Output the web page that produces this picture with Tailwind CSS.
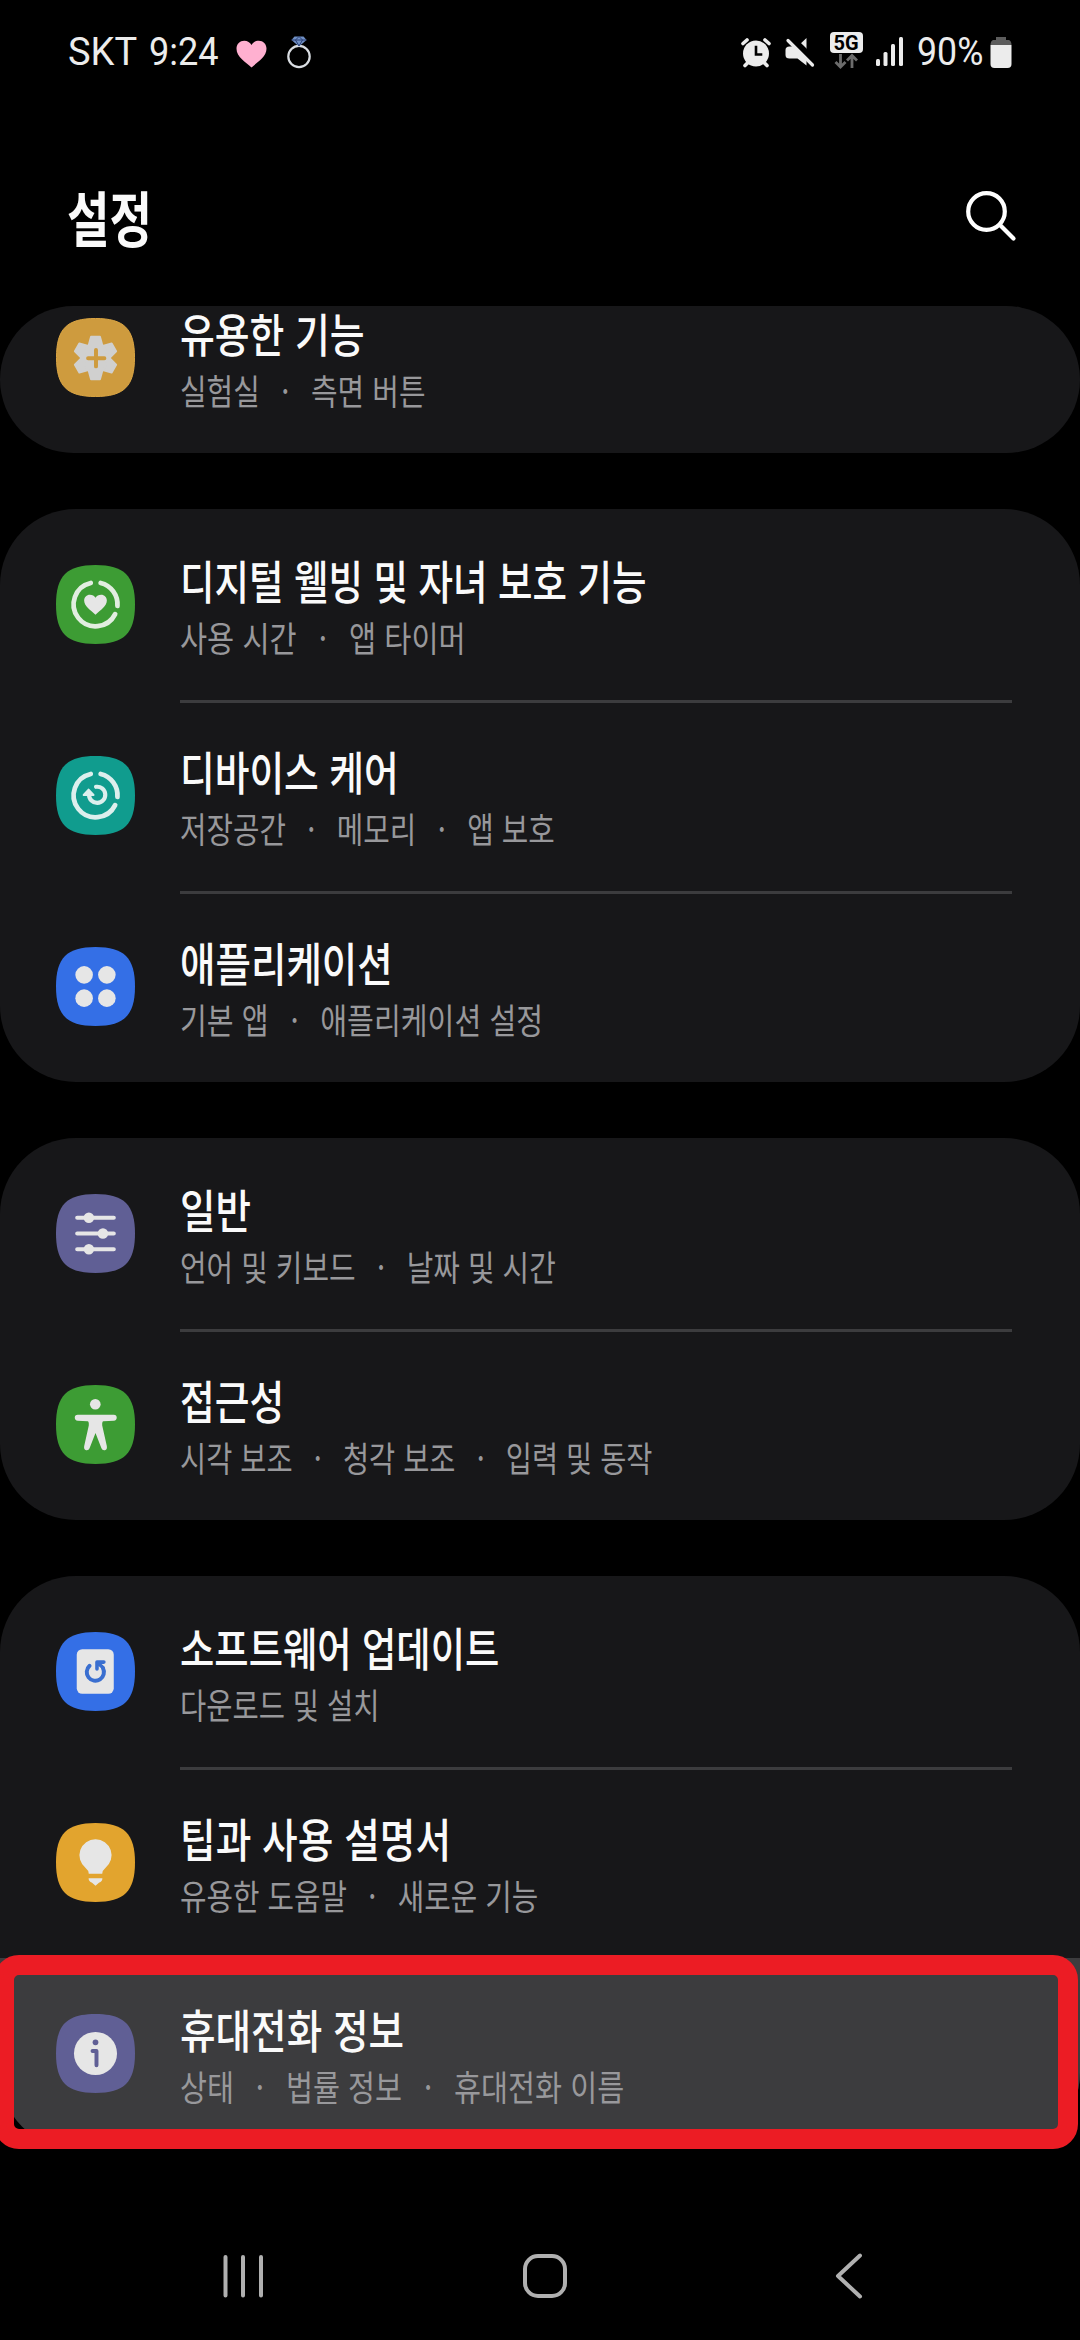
<!DOCTYPE html>
<html lang="ko">
<head>
<meta charset="utf-8">
<title>설정</title>
<script src="https://cdn.jsdelivr.net/npm/@tailwindcss/browser@4"></script>
</head>
<body class="bg-black">
<div class="relative flex h-[2340px] w-[1080px] flex-col overflow-hidden bg-black font-['Noto_Sans_CJK_KR','Noto_Sans',sans-serif] text-[#fafafa]">

  <!-- status bar -->
  <header class="flex h-[104px] shrink-0 items-center justify-between pl-[68px] pr-[68px] text-[#ececec]">
    <div class="flex items-center font-[Roboto,sans-serif] text-[38px] leading-none">
      <span class="w-[81px] origin-left whitespace-nowrap">SKT</span>
      <span class="w-[87px] origin-left scale-x-[0.95] whitespace-nowrap">9:24</span>
      <svg class="mt-1 h-[28px] w-[31px]" viewBox="0 0 31 28"><path fill="#ffb0d0" d="M15.500 27.500C10 22.500.5 17 .5 8.800.5 4 4 .8 8.200.8c3.300 0 5.900 1.600 7.300 4.200C16.900 2.400 19.500.8 22.800.8 27 .8 30.500 4 30.500 8.800c0 8.200-9.500 13.700-15 18.700z"/></svg>
      <svg class="ml-[19px] h-[34px] w-[26px]" viewBox="0 0 26 34"><circle cx="13" cy="21.500" r="10.700" fill="none" stroke="#d9dde2" stroke-width="2.200"/><path fill="#6f8fc4" d="M8.500 1.500h9l3 3.500L13 11.500 5.500 5z"/><path fill="none" stroke="#2b3f75" stroke-width="1" d="M5.500 5h15M9.500 5l3.500 6 3.500-6-3.500-3.500z"/></svg>
    </div>
    <div class="flex items-center">
      <svg class="h-[32px] w-[32px]" viewBox="0 0 32 32" fill="none" stroke="#ececec" stroke-linecap="round"><circle cx="16" cy="17.500" r="13" fill="#ececec" stroke="none"/><path stroke-width="3.600" d="M3 7.500 7 4M29 7.500 25 4M7.500 27 5 29.500M24.500 27l2.500 2.500"/><path stroke="#000" stroke-width="2.600" stroke-linecap="square" d="M16 11v7.500h5"/></svg>
      <svg class="ml-[12px] h-[32px] w-[32px]" viewBox="0 0 32 32"><path fill="#ececec" d="M22.500 2v27.500l-9-7H5.500Q1.500 22.500 1.500 19v-5q0-3.500 4-3.500h8z"/><path stroke="#000" stroke-width="7" d="M6 1 33 28"/><path stroke="#ececec" stroke-width="3.200" stroke-linecap="round" d="M4 4.500 28.500 29"/></svg>
      <div class="ml-[13px] flex w-[34px] flex-col items-center">
        <div class="mt-[-3px] flex h-[21px] w-[33px] items-center justify-center rounded-[4px] bg-[#ececec] font-[Roboto,sans-serif] text-[20px] leading-none font-bold text-black">5G</div>
        <svg class="h-[16px] w-[26px]" viewBox="0 0 26 16" fill="none" stroke="#6c6c6c" stroke-width="2.800"><path d="M7.500 1v12.500M2.500 9l5 5 5-5M19 15V3M14 7.500l5-5 5 5"/></svg>
      </div>
      <svg class="ml-[12px] h-[32px] w-[30px]" viewBox="0 0 30 32" fill="#ececec"><rect x="1" y="23" width="4" height="7" rx="1.500"/><rect x="8.500" y="16" width="4" height="14" rx="1.500"/><rect x="16" y="8" width="4" height="22" rx="1.500"/><rect x="24" y="1" width="4" height="29" rx="1.500"/></svg>
      <span class="ml-[12px] w-[73px] origin-left scale-x-[0.94] font-[Roboto,sans-serif] text-[38px] leading-none">90%</span>
      <svg class="h-[32px] w-[22px]" viewBox="0 0 22 32"><path fill="#5c5c5c" d="M6 1h10v3h3q2.500 1 2.500 5H.5q0-4 2.500-5h3z"/><path fill="#ececec" d="M.5 9h21v19q0 4-4 4h-13q-4 0-4-4z"/></svg>
    </div>
  </header>

  <div class="flex h-[202px] shrink-0 items-center justify-between pt-[23px] pr-[62px] pb-[1px] pl-[67px]">
    <h1 class="origin-left scale-x-[0.77] text-[60px] leading-none font-bold">설정</h1>
    <svg class="h-[54px] w-[54px]" viewBox="0 0 54 54" fill="none" stroke="#fff" stroke-width="4.200" stroke-linecap="round"><circle cx="22.500" cy="22.500" r="18.300"/><path d="M36 36 49.500 49.500"/></svg>
  </div>

  <main class="flex flex-col">
    <!-- advanced features, scrolled partly under the title -->
    <section class="mb-[56px] flex h-[147px] rounded-[76px] bg-[#171719] pl-[56px]">
      <svg class="mt-[12px] h-[79px] w-[79px] shrink-0" viewBox="0 0 80 80"><path fill="#ce9b3e" stroke="#dca744" stroke-width="1" d="M40 .5C69 .5 79.500 11 79.500 40S69 79.500 40 79.500.5 69 .5 40 11 .5 40 .5Z"/><g fill="#d0d0cf" stroke="#d0d0cf" stroke-width="2" stroke-linejoin="round"><circle cx="40" cy="40.500" r="14.500"/><path d="M35.500 19h9L47 28H33z"/><path d="M35.500 19h9L47 28H33z" transform="rotate(60 40 40.500)"/><path d="M35.500 19h9L47 28H33z" transform="rotate(120 40 40.500)"/><path d="M35.500 19h9L47 28H33z" transform="rotate(180 40 40.500)"/><path d="M35.500 19h9L47 28H33z" transform="rotate(240 40 40.500)"/><path d="M35.500 19h9L47 28H33z" transform="rotate(300 40 40.500)"/></g><path stroke="#ce9b3e" stroke-width="4" stroke-linecap="round" d="M40.500 32.500v16.500M32.500 40.700h16.500"/></svg>
      <div class="ml-[45px] whitespace-nowrap">
        <p class="h-[58px] origin-left scale-x-[0.822] text-[46px] leading-[52px] font-medium">유용한 기능</p>
        <p class="flex h-[48px] origin-left scale-x-[0.826] text-[35px] leading-[52px] text-[#98989b]">실험실<span class="w-[62px] text-center">·</span>측면 버튼</p>
      </div>
    </section>

    <section class="mb-[56px] rounded-[76px] bg-[#171719]">
      <div class="flex h-[191px] pt-[42px] pl-[56px]">
        <svg class="mt-[14px] h-[79px] w-[79px] shrink-0" viewBox="0 0 80 80"><path fill="#3d9c34" d="M40 0C69 0 80 11 80 40S69 80 40 80 0 69 0 40 11 0 40 0Z"/><g fill="none" stroke="#e2eee0" stroke-width="4.800" stroke-linecap="round"><path d="M45.200 18.200A22.200 22.200 0 0 1 62.200 41.500"/><path d="M59.900 49.800A22.200 22.200 0 1 1 35.200 18.200"/></g><path fill="#e6e6e6" d="M40 50.500C35 45.500 28.500 42 28.500 36c0-3.500 2.500-6 5.800-6 2.500 0 4.600 1.200 5.700 3.200C41.100 31.200 43.200 30 45.700 30c3.300 0 5.800 2.500 5.800 6 0 6-6.500 9.500-11.500 14.500z"/></svg>
        <div class="ml-[45px] whitespace-nowrap">
          <p class="h-[60px] origin-left scale-x-[0.815] text-[46px] leading-[56px] font-medium">디지털 웰빙 및 자녀 보호 기능</p>
          <p class="flex h-[48px] origin-left scale-x-[0.842] text-[35px] leading-[52px] text-[#98989b]">사용 시간<span class="w-[62px] text-center">·</span>앱 타이머</p>
        </div>
      </div>
      <div class="relative flex h-[191px] pt-[42px] pl-[56px]">
        <div class="absolute top-0 right-[68px] left-[180px] h-[3px] bg-[#3c3c3e]"></div>
        <svg class="mt-[14px] h-[79px] w-[79px] shrink-0" viewBox="0 0 80 80"><path fill="#109c8e" d="M40 0C69 0 80 11 80 40S69 80 40 80 0 69 0 40 11 0 40 0Z"/><g fill="none" stroke="#dcefed" stroke-width="4.800" stroke-linecap="round"><path d="M45.200 18.200A22.200 22.200 0 0 1 62.200 41.500"/><path d="M59.900 49.800A22.200 22.200 0 1 1 35.200 18.200"/><path stroke-width="4.200" d="M40.500 31.200A8.200 8.200 0 1 1 33.500 39"/></g><path fill="#dcefed" stroke="#dcefed" stroke-width="2" stroke-linejoin="round" d="M33 34 28 39.500H38z"/></svg>
        <div class="ml-[45px] whitespace-nowrap">
          <p class="h-[60px] origin-left scale-x-[0.82] text-[46px] leading-[56px] font-medium">디바이스 케어</p>
          <p class="flex h-[48px] origin-left scale-x-[0.822] text-[35px] leading-[52px] text-[#98989b]">저장공간<span class="w-[62px] text-center">·</span>메모리<span class="w-[62px] text-center">·</span>앱 보호</p>
        </div>
      </div>
      <div class="relative flex h-[191px] pt-[42px] pl-[56px]">
        <div class="absolute top-0 right-[68px] left-[180px] h-[3px] bg-[#3c3c3e]"></div>
        <svg class="mt-[14px] h-[79px] w-[79px] shrink-0" viewBox="0 0 80 80"><path fill="#346fe6" d="M40 0C69 0 80 11 80 40S69 80 40 80 0 69 0 40 11 0 40 0Z"/><g fill="#e6e6e6"><circle cx="28.500" cy="28.200" r="8.900"/><circle cx="51.500" cy="28.200" r="8.900"/><circle cx="28.500" cy="51.800" r="8.900"/><circle cx="51.500" cy="51.800" r="8.900"/></g></svg>
        <div class="ml-[45px] whitespace-nowrap">
          <p class="h-[60px] origin-left scale-x-[0.838] text-[46px] leading-[56px] font-medium">애플리케이션</p>
          <p class="flex h-[48px] origin-left scale-x-[0.833] text-[35px] leading-[52px] text-[#98989b]">기본 앱<span class="w-[62px] text-center">·</span>애플리케이션 설정</p>
        </div>
      </div>
    </section>

    <section class="mb-[56px] rounded-[76px] bg-[#171719]">
      <div class="flex h-[191px] pt-[42px] pl-[56px]">
        <svg class="mt-[14px] h-[79px] w-[79px] shrink-0" viewBox="0 0 80 80"><path fill="#605f95" d="M40 0C69 0 80 11 80 40S69 80 40 80 0 69 0 40 11 0 40 0Z"/><path stroke="#e6e6e6" stroke-width="4.200" stroke-linecap="round" d="M21.500 24h37M21.500 40h37M21.500 56h37"/><g fill="#e6e6e6"><circle cx="33.300" cy="24" r="5.300"/><circle cx="47.500" cy="40" r="5.300"/><circle cx="33.300" cy="56" r="5.300"/></g></svg>
        <div class="ml-[45px] whitespace-nowrap">
          <p class="h-[60px] origin-left scale-x-[0.84] text-[46px] leading-[56px] font-medium">일반</p>
          <p class="flex h-[48px] origin-left scale-x-[0.825] text-[35px] leading-[52px] text-[#98989b]">언어 및 키보드<span class="w-[62px] text-center">·</span>날짜 및 시간</p>
        </div>
      </div>
      <div class="relative flex h-[191px] pt-[42px] pl-[56px]">
        <div class="absolute top-0 right-[68px] left-[180px] h-[3px] bg-[#3c3c3e]"></div>
        <svg class="mt-[14px] h-[79px] w-[79px] shrink-0" viewBox="0 0 80 80"><path fill="#3d9c34" d="M40 0C69 0 80 11 80 40S69 80 40 80 0 69 0 40 11 0 40 0Z"/><g fill="#e6e6e6"><circle cx="39.800" cy="19.500" r="5.400"/><path d="M22 30H58.500Q61.500 30 61.500 33T58.500 36.200L48 36.800Q46.500 37 46.800 41L51.500 62Q52 65.500 49.500 66T46 64L40 48.500 34 64Q33 66.500 30.500 66T28.500 62L33.200 41Q33.500 37 32 36.800L22 36.200Q19 36 19 33T22 30Z"/></g></svg>
        <div class="ml-[45px] whitespace-nowrap">
          <p class="h-[60px] origin-left scale-x-[0.82] text-[46px] leading-[56px] font-medium">접근성</p>
          <p class="flex h-[48px] origin-left scale-x-[0.812] text-[35px] leading-[52px] text-[#98989b]">시각 보조<span class="w-[62px] text-center">·</span>청각 보조<span class="w-[62px] text-center">·</span>입력 및 동작</p>
        </div>
      </div>
    </section>

    <section class="overflow-hidden rounded-[76px] bg-[#171719]">
      <div class="flex h-[191px] pt-[42px] pl-[56px]">
        <svg class="mt-[14px] h-[79px] w-[79px] shrink-0" viewBox="0 0 80 80"><path fill="#346fe6" d="M40 0C69 0 80 11 80 40S69 80 40 80 0 69 0 40 11 0 40 0Z"/><rect x="21" y="17.500" width="37.500" height="45" rx="5.500" fill="#e6e6e6"/><path fill="none" stroke="#3a6fd0" stroke-width="4" stroke-linecap="round" d="M34 34.200A8.700 8.700 0 1 0 47.500 36.500"/><path fill="none" stroke="#3a6fd0" stroke-width="3.600" stroke-linecap="round" stroke-linejoin="round" d="M41.500 37.500V30.500H48.500M42 31l5.500 5"/></svg>
        <div class="ml-[45px] whitespace-nowrap">
          <p class="h-[60px] origin-left scale-x-[0.811] text-[46px] leading-[56px] font-medium">소프트웨어 업데이트</p>
          <p class="flex h-[48px] origin-left scale-x-[0.814] text-[35px] leading-[52px] text-[#98989b]">다운로드 및 설치</p>
        </div>
      </div>
      <div class="relative flex h-[191px] pt-[42px] pl-[56px]">
        <div class="absolute top-0 right-[68px] left-[180px] h-[3px] bg-[#3c3c3e]"></div>
        <svg class="mt-[14px] h-[79px] w-[79px] shrink-0" viewBox="0 0 80 80"><path fill="#e2a42e" d="M40 0C69 0 80 11 80 40S69 80 40 80 0 69 0 40 11 0 40 0Z"/><path fill="#e6e6e6" d="M40 16.500A16.200 16.200 0 0 0 30 45.500Q33.200 48 33.200 51.500H46.800Q46.800 48 50 45.500A16.200 16.200 0 0 0 40 16.500ZM33 56H47Q47 59.500 43.500 60.500L40 63.500 36.500 60.500Q33 59.500 33 56Z"/></svg>
        <div class="ml-[45px] whitespace-nowrap">
          <p class="h-[60px] origin-left scale-x-[0.842] text-[46px] leading-[56px] font-medium">팁과 사용 설명서</p>
          <p class="flex h-[48px] origin-left scale-x-[0.822] text-[35px] leading-[52px] text-[#98989b]">유용한 도움말<span class="w-[62px] text-center">·</span>새로운 기능</p>
        </div>
      </div>
      <div class="flex h-[191px] bg-[#3c3c3e] pt-[42px] pl-[56px]">
        <svg class="mt-[14px] h-[79px] w-[79px] shrink-0" viewBox="0 0 80 80"><path fill="#605f95" d="M40 0C69 0 80 11 80 40S69 80 40 80 0 69 0 40 11 0 40 0Z"/><circle cx="40" cy="40" r="21.800" fill="#e6e6e6"/><circle cx="40" cy="28.700" r="2.900" fill="#605f95"/><path fill="none" stroke="#605f95" stroke-width="4" stroke-linecap="round" stroke-linejoin="round" d="M37 37.500h4V52"/></svg>
        <div class="ml-[45px] whitespace-nowrap">
          <p class="h-[60px] origin-left scale-x-[0.84] text-[46px] leading-[56px] font-medium">휴대전화 정보</p>
          <p class="flex h-[48px] origin-left scale-x-[0.838] text-[35px] leading-[52px] text-[#98989b]">상태<span class="w-[62px] text-center">·</span>법률 정보<span class="w-[62px] text-center">·</span>휴대전화 이름</p>
        </div>
      </div>
    </section>
  </main>

  <!-- highlight frame over the phone info row -->
  <div class="absolute top-[1955px] left-[-6px] h-[194px] w-[1084px] rounded-[25px] border-[20px] border-[#ec1c24]"></div>

  <nav class="mt-[101px] flex h-[52px] items-center pl-[221px]">
    <svg class="h-[52px] w-[44px]" viewBox="0 0 44 52" stroke="#b0b0b0" stroke-width="4" stroke-linecap="round"><path d="M4.500 7v38.500M22 7v38.500M40 7v38.500"/></svg>
    <svg class="ml-[257px] h-[52px] w-[46px]" viewBox="0 0 46 52" fill="none" stroke="#b0b0b0" stroke-width="4"><rect x="3" y="6" width="40" height="40" rx="13"/></svg>
    <svg class="ml-[266px] h-[52px] w-[32px]" viewBox="0 0 32 52" fill="none" stroke="#b0b0b0" stroke-width="4" stroke-linecap="round" stroke-linejoin="round"><path d="M26 5.500 4 26 26 46.500"/></svg>
  </nav>
</div>
</body>
</html>
